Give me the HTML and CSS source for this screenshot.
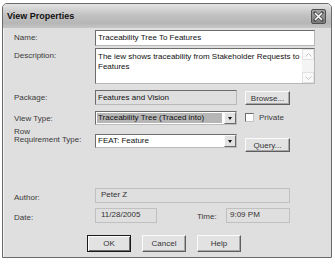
FILE: index.html
```html
<!DOCTYPE html>
<html lang="en">
<head>
<meta charset="UTF-8">
<title>View Properties</title>
<link rel="stylesheet" href="styles.css">
</head>
<body>
<div class="window">
    <div class="titlebar">
        <span class="title">View Properties</span>
        <span class="close">
            <svg width="11" height="11" viewBox="0 0 11 11">
                <path d="M2 2 L9 9 M9 2 L2 9" stroke="#444" stroke-width="3" stroke-linecap="square"/>
                <path d="M2 2 L9 9 M9 2 L2 9" stroke="#fff" stroke-width="1.6"/>
            </svg>
        </span>
    </div>
    <div class="content">
        <div class="row name-row">
            <div class="lbl">Name:</div>
            <div class="field wide">Traceability Tree To Features</div>
        </div>
        <div class="row desc-row">
            <div class="lbl">Description:</div>
            <div class="field wide textarea">
                <div class="ta-text">The iew shows traceability from Stakeholder Requests to Features</div>
                <div class="vscroll">
                    <span class="sb-btn"><svg width="7" height="4" viewBox="0 0 7 4"><path d="M0.5 3.5 L3.5 0.5 L6.5 3.5" fill="none" stroke="#c4c4c4"/></svg></span>
                    <span class="sb-track"></span>
                    <span class="sb-btn"><svg width="7" height="4" viewBox="0 0 7 4"><path d="M0.5 0.5 L3.5 3.5 L6.5 0.5" fill="none" stroke="#c4c4c4"/></svg></span>
                </div>
            </div>
        </div>
        <div class="row pkg-row">
            <div class="lbl">Package:</div>
            <div class="field mid readonly">Features and Vision</div>
            <button class="btn side">Browse...</button>
        </div>
        <div class="row view-row">
            <div class="lbl">View Type:</div>
            <div class="combo grey">
                <span class="combo-text">Traceability Tree (Traced into)</span>
                <span class="drop"></span>
            </div>
            <div class="check"><span class="box"></span>Private</div>
        </div>
        <div class="row req-row">
            <div class="lbl two">Row<br>Requirement Type:</div>
            <div class="combo req-combo">
                <span class="combo-text">FEAT: Feature</span>
                <span class="drop"></span>
            </div>
            <button class="btn side query">Query...</button>
        </div>
        <div class="row author-row">
            <div class="lbl low">Author:</div>
            <div class="flat author">Peter Z</div>
        </div>
        <div class="row date-row">
            <div class="lbl low">Date:</div>
            <div class="flat date">11/28/2005</div>
            <div class="time-lbl">Time:</div>
            <div class="flat time">9:09 PM</div>
        </div>
        <div class="buttons">
            <button class="btn big default">OK</button>
            <button class="btn big">Cancel</button>
            <button class="btn big">Help</button>
        </div>
    </div>
</div>
</body>
</html>
```

FILE: styles.css
```css
body {
    margin: 0;
    background-color: #fff;
    font-family: "Liberation Sans", Arial, sans-serif;
    font-size: 8px;
    color: #333;
}

.window {
    margin: 3px 0 0 2px;
    width: 330px;
    height: 255px;
    box-sizing: border-box;
    border: 1px solid #6a6a6a;
    border-radius: 5px 5px 0 0;
    background-color: #dfdfdf;
    display: flex;
    flex-direction: column;
}

.titlebar {
    height: 24px;
    flex: none;
    display: flex;
    align-items: center;
    justify-content: space-between;
    padding: 0 5px 0 4px;
    border-radius: 4px 4px 0 0;
    background: linear-gradient(#e4e4e4, #c2c2c2 45%, #b6b6b6 80%, #c6c6c6);
}

.title {
    font-weight: bold;
    font-size: 9px;
    color: #111;
}

.close {
    width: 15px;
    height: 15px;
    box-sizing: border-box;
    border: 1px solid #4e4e4e;
    border-radius: 2px;
    background: linear-gradient(#a4a4a4, #7a7a7a);
    display: flex;
    align-items: center;
    justify-content: center;
}

.content {
    flex: 1;
    padding: 2px 0 0 10px;
    display: flex;
    flex-direction: column;
    border-left: 1px solid #f4f4f4;
}

.row {
    display: flex;
    align-items: flex-start;
}

.lbl {
    width: 81px;
    flex: none;
    line-height: 16px;
    color: #3a3a3a;
}

.field {
    box-sizing: border-box;
    height: 16px;
    padding: 0 2px;
    line-height: 14px;
    background-color: #fff;
    color: #111;
    border: 1px solid;
    border-color: #6c6c6c #b8b8b8 #b8b8b8 #6c6c6c;
    white-space: nowrap;
}

.wide {
    width: 220px;
}

.mid {
    width: 142px;
    height: 15px;
    line-height: 13px;
}

.readonly {
    background-color: #dfdfdf;
}

.desc-row {
    margin-top: 2px;
}

.textarea {
    height: 36px;
    display: flex;
    padding: 0;
}

.ta-text {
    flex: 1;
    padding: 3px 2px 0;
    line-height: 10px;
    white-space: normal;
}

.vscroll {
    width: 12px;
    display: flex;
    flex-direction: column;
    background-color: #f4f4f4;
}

.sb-btn {
    height: 11px;
    box-sizing: border-box;
    border: 1px solid #e2e2e2;
    background-color: #fafafa;
    display: flex;
    align-items: center;
    justify-content: center;
}

.sb-track {
    flex: 1;
}

.pkg-row {
    margin-top: 6px;
    height: 15px;
}

.btn {
    font-family: "Liberation Sans", Arial, sans-serif;
    font-size: 8px;
    color: #333;
    background-color: #e2e2e2;
    box-sizing: border-box;
    padding: 0;
    border: 1px solid;
    border-color: #fbfbfb #5e5e5e #5e5e5e #fbfbfb;
    box-shadow: inset -1px -1px 0 #a8a8a8;
}

.side {
    width: 45px;
    height: 14px;
    margin: 1px 0 0 8px;
}

.view-row {
    margin-top: 6px;
    height: 14px;
}

.combo {
    width: 142px;
    height: 14px;
    box-sizing: border-box;
    display: flex;
    align-items: stretch;
    background-color: #fff;
    border: 1px solid;
    border-color: #6c6c6c #bcbcbc #bcbcbc #6c6c6c;
    line-height: 12px;
    color: #111;
}

.combo-text {
    flex: 1;
    padding-left: 2px;
    white-space: nowrap;
    overflow: hidden;
}

.grey .combo-text {
    background-color: #b6b6b6;
    margin: 1px 2px 1px 1px;
    line-height: 10px;
    padding-left: 1px;
}

.drop {
    width: 12px;
    box-sizing: border-box;
    background-color: #e2e2e2;
    border: 1px solid;
    border-color: #fbfbfb #6a6a6a #6a6a6a #fbfbfb;
    position: relative;
}

.drop::after {
    content: "";
    position: absolute;
    left: 3px;
    top: 4px;
    border-left: 2.5px solid transparent;
    border-right: 2.5px solid transparent;
    border-top: 3px solid #111;
}

.check {
    display: flex;
    align-items: center;
    margin: 2px 0 0 8px;
    color: #3a3a3a;
    line-height: 9px;
}

.box {
    width: 9px;
    height: 9px;
    box-sizing: border-box;
    background-color: #fff;
    border: 1px solid;
    border-color: #6c6c6c #c4c4c4 #c4c4c4 #6c6c6c;
    margin-right: 5px;
}

.req-row {
    margin-top: 3px;
    height: 24px;
}

.lbl.two {
    line-height: 8px;
}

.req-combo {
    margin-top: 6px;
}

.query {
    margin-top: 10px;
}

.author-row {
    margin-top: 36px;
    height: 15px;
}

.flat {
    box-sizing: border-box;
    height: 15px;
    border: 1px solid #c0c0c0;
    padding: 1px 0 0 5px;
    line-height: 10px;
    color: #333;
}

.author {
    width: 195px;
}

.lbl.low {
    padding-top: 2px;
}

.date-row {
    margin-top: 5px;
    height: 15px;
}

.date {
    width: 62px;
}

.time-lbl {
    margin-left: 40px;
    width: 29px;
    line-height: 17px;
    color: #3a3a3a;
}

.time {
    width: 64px;
    padding-left: 3px;
}

.buttons {
    display: flex;
    gap: 11px;
    margin: 12px 0 0 73px;
}

.big {
    width: 44px;
    height: 17px;
}

.default {
    border: 1px solid #1a1a1a;
    box-shadow: inset 1px 1px 0 #fbfbfb, inset -1px -1px 0 #6a6a6a;
}
```
